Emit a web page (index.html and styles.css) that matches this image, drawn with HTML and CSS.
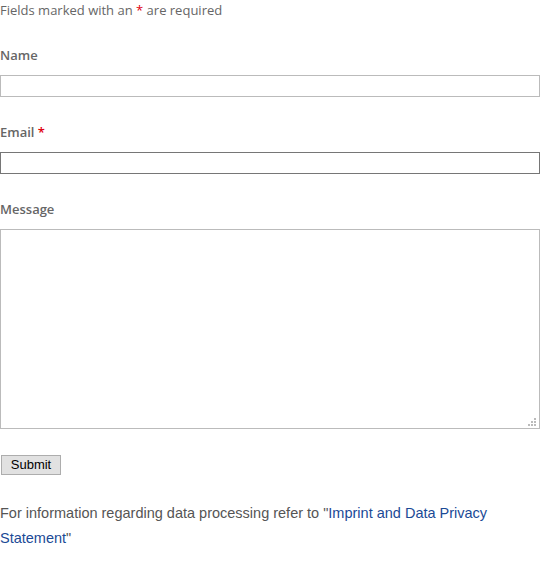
FILE: index.html
```html
<!DOCTYPE html>
<html>
<head>
<meta charset="utf-8">
<link rel="stylesheet" href="styles.css">
</head>
<body>
<form class="form">
  <p class="intro">Fields marked with an <span class="req">*</span> are required</p>
  <div class="field">
    <label class="label">Name</label>
    <input class="input" type="text">
  </div>
  <div class="field">
    <label class="label">Email <span class="req">*</span></label>
    <input class="input input-dark" type="email">
  </div>
  <div class="field">
    <label class="label">Message</label>
    <div class="textarea-wrap">
      <textarea class="textarea"></textarea>
      <span class="grip"></span>
    </div>
  </div>
  <div class="actions">
    <button class="btn" type="button">Submit</button>
  </div>
  <p class="note">For information regarding data processing refer to "<a class="link" href="#">Imprint and Data Privacy Statement</a>"</p>
</form>
</body>
</html>
```
FILE: styles.css
```css
html, body {
  margin: 0;
  padding: 0;
  background: #fff;
}
body {
  font-family: "Open Sans", "Liberation Sans", sans-serif;
  font-size: 13px;
  color: #666;
}
.form {
  display: flex;
  flex-direction: column;
  width: 540px;
}
.intro {
  margin: 0;
  line-height: 20px;
}
.req {
  color: #e0000e;
}
.field {
  display: flex;
  flex-direction: column;
  gap: 10px;
  margin-top: 25px;
}
.label {
  font-weight: 600;
  line-height: 20px;
}
.input {
  box-sizing: border-box;
  width: 540px;
  height: 22px;
  margin: 0;
  border: 1px solid #bbb;
  padding: 0 4px;
  background: #fff;
  font: inherit;
  outline: none;
}
.input-dark {
  border-color: #767676;
}
.textarea-wrap {
  position: relative;
  display: flex;
}
.textarea {
  box-sizing: border-box;
  width: 540px;
  height: 200px;
  margin: 0;
  border: 1px solid #bbb;
  padding: 2px 4px;
  font: inherit;
  outline: none;
  resize: none;
}
.grip {
  position: absolute;
  right: 4px;
  bottom: 3px;
  width: 2px;
  height: 2px;
  background: #bbb;
  box-shadow: -3px 0 0 #bbb, -6px 0 0 #bbb, 0 -3px 0 #bbb, -3px -3px 0 #bbb, 0 -6px 0 #bbb;
  pointer-events: none;
}
.actions {
  margin-top: 26px;
  display: flex;
}
.btn {
  margin: 0 0 0 1px;
  box-sizing: border-box;
  width: 60px;
  height: 20px;
  padding: 0;
  border: 1px solid #adadad;
  background: #e1e1e1;
  color: #000;
  font-family: "Liberation Sans", Arial, sans-serif;
  font-size: 13px;
  line-height: 18px;
  border-radius: 0;
}
.note {
  margin: 26px 0 0;
  font-family: "Liberation Sans", Arial, sans-serif;
  font-size: 14.5px;
  line-height: 25px;
  color: #555;
}
.link {
  color: #1b4a96;
  text-decoration: none;
}
```
